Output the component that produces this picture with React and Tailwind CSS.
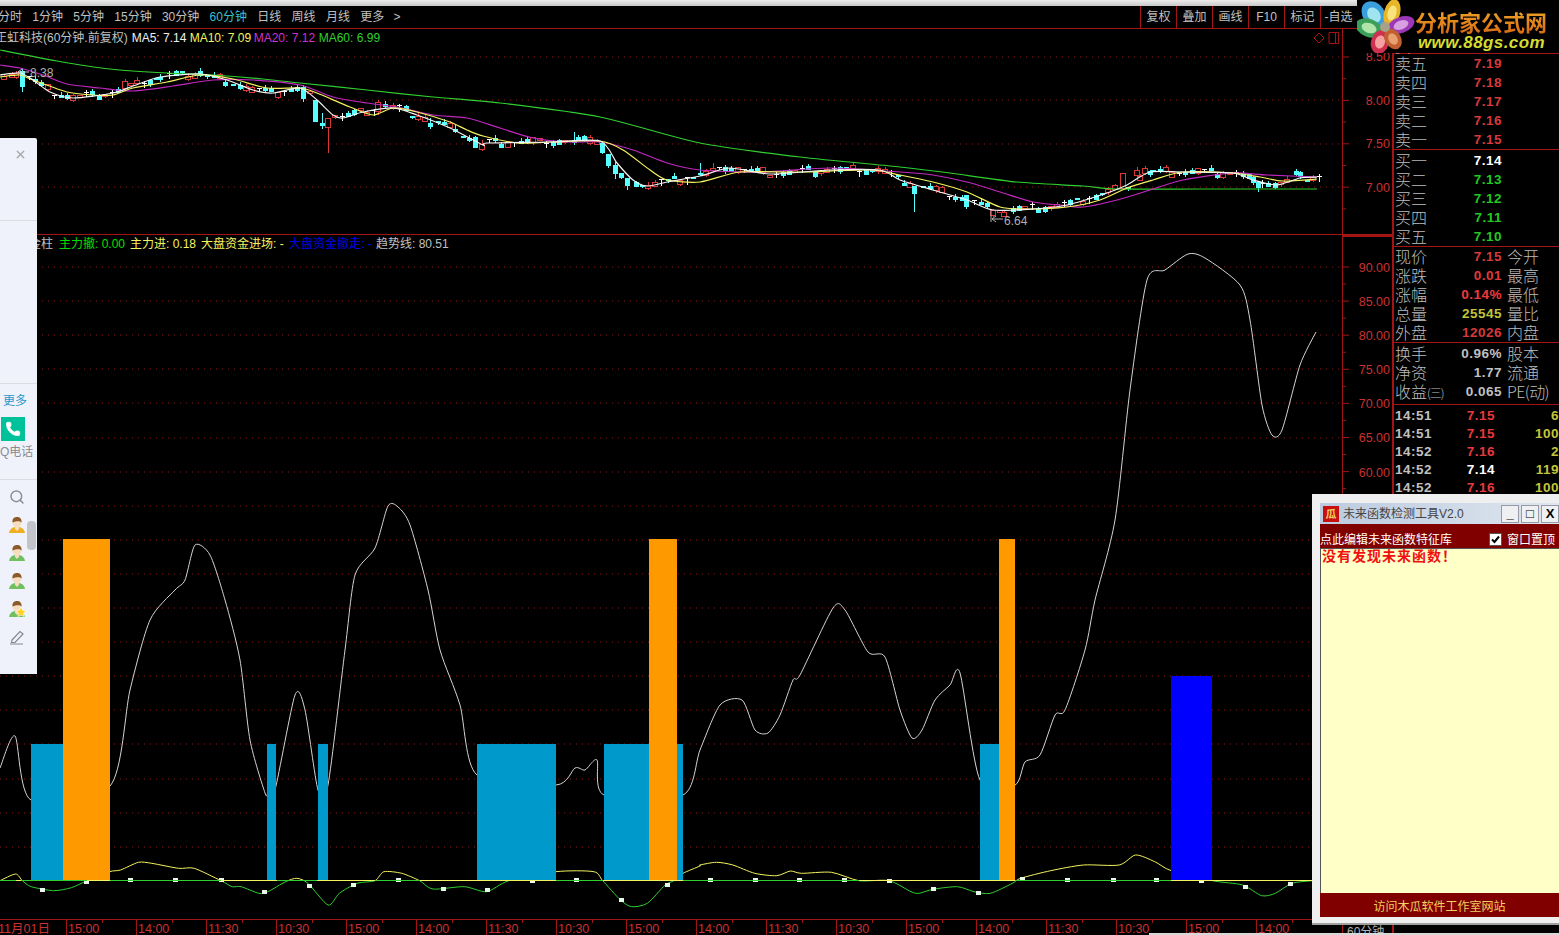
import React from "react";
import { Phone, Search, X } from "lucide-react";

const RED = "#a51414";
const cjk = "font-['Liberation_Sans','Noto_Sans_CJK_SC',sans-serif]";

const smooth = (pts) => {
  let d = `M${pts[0][0]} ${pts[0][1]}`;
  for (let i = 0; i < pts.length - 1; i++) {
    const p0 = pts[i - 1] || pts[i], p1 = pts[i], p2 = pts[i + 1], p3 = pts[i + 2] || p2;
    const c1x = p1[0] + (p2[0] - p0[0]) / 8, c1y = p1[1] + (p2[1] - p0[1]) / 8;
    const c2x = p2[0] - (p3[0] - p1[0]) / 8, c2y = p2[1] - (p3[1] - p1[1]) / 8;
    d += `C${c1x.toFixed(1)} ${c1y.toFixed(1)} ${c2x.toFixed(1)} ${c2y.toFixed(1)} ${p2[0].toFixed(1)} ${p2[1].toFixed(1)}`;
  }
  return d;
};

const ma60 = [[0,50],[57,61],[110,69],[167,73],[213,75],[263,79],[300,83],[367,90],[433,97],[500,103],[600,117],[700,143],[800,157],[900,167],[950,173],[1017,182],[1083,186],[1117,189],[1200,189],[1317,189]];
const ma20 = [[0,65],[20,68],[43,75],[67,84],[100,88],[133,91],[173,86],[213,80],[253,80],[300,85],[333,97],[367,103],[397,107],[433,115],[467,118],[500,128],[533,138],[567,142],[600,142],[633,150],[667,163],[700,170],[760,172],[830,168],[900,172],[933,175],[967,182],[1000,192],[1033,202],[1060,205],[1083,207],[1117,200],[1150,190],[1183,180],[1233,173],[1267,175],[1317,177]];
const ma10 = [[0,77],[20,75],[33,80],[67,92],[93,95],[113,95],[133,88],[167,82],[200,75],[233,79],[267,88],[300,88],[317,93],[350,107],[373,115],[393,108],[417,112],[450,122],[467,130],[483,136],[517,143],[550,142],[600,141],[623,150],[650,170],[667,180],[700,182],[740,172],[800,172],[870,170],[900,175],[933,182],[967,192],[1000,207],[1027,209],[1067,207],[1100,200],[1127,188],[1153,180],[1183,172],[1233,173],[1260,177],[1283,181],[1317,179]];
const ma5 = [[0,75],[20,73],[33,80],[50,92],[73,98],[113,93],[133,86],[160,77],[200,74],[227,80],[253,90],[273,93],[300,88],[317,100],[333,115],[343,118],[363,112],[393,108],[417,115],[450,128],[483,145],[487,143],[550,142],[600,141],[617,163],[633,180],[647,186],[667,182],[700,176],[730,168],[770,174],[830,170],[880,170],[900,180],[933,190],[967,200],[993,210],[1033,209],[1067,205],[1107,193],[1127,185],[1150,172],[1183,172],[1233,173],[1253,180],[1277,185],[1300,178],[1317,177]];

const interp = (pts, x) => {
  for (let i = 1; i < pts.length; i++) {
    if (x <= pts[i][0]) {
      const [a, b] = pts[i - 1], [c, d] = pts[i];
      return b + ((x - a) / (c - a)) * (d - b);
    }
  }
  return pts[pts.length - 1][1];
};

const bigCandles = [
  ["c",22,71,87,68,92],["c",315,100,122,100,122],["c",322,123,126,113,129],["r",328,118,127,118,153],["r",378,102,111,100,115],
  ["c",303,87,99,85,102],["r",125,81,88,79,90],["c",475,137,148,136,148],["r",482,144,149,140,151],["c",602,143,153,142,154],["c",608,154,166,154,168],
  ["c",615,165,174,162,179],["c",621,173,178,173,179],["c",627,178,186,178,190],["c",914,186,194,186,212],["c",966,195,207,195,209],
  ["r",1123,173,188,173,188],["c",1150,171,175,170,177],["c",1253,177,183,176,185],["c",1258,182,188,182,192],["c",1296,171,175,169,176],
  ["r",12,74,77,72,78],["r",4,76,79,74,80],["c",160,77,80,74,82],["c",200,71,76,68,77],["c",240,85,89,82,90],["c",225,82,86,80,87],
  ["c",385,104,107,101,108],["c",430,123,127,118,129],["c",455,129,132,125,133],["c",700,173,175,163,176],["r",713,168,170,163,172],["c",725,167,172,165,174],
  ["r",590,137,143,135,145],["c",574,141,143,132,145],["r",1004,212,216,210,217],["r",1137,170,175,167,177],["r",1145,168,173,166,175],
];

function TopChart() {
  const candles = [];
  for (let i = 0; i <= 206; i++) {
    const x = 3 + i * 6.39;
    if (bigCandles.some((b) => Math.abs(b[1] - x) < 3.2)) continue;
    const y = interp(ma5, x) + ((i * 13) % 7) - 3;
    const k = (i * 11) % 9;
    const kind = k < 4 ? "c" : k < 7 ? "r" : "w";
    const h = 2 + ((i * 5) % 4);
    candles.push([kind, x, y - h / 2, y + h / 2, y - h / 2 - ((i * 3) % 4), y + h / 2 + ((i * 7) % 3)]);
  }
  const all = [...candles, ...bigCandles];
  return (
    <svg className="block w-full h-[188px]" viewBox="0 46 1342 188">
      {[57, 100, 144, 187].map((y) => (
        <line key={y} x1="0" x2="1342" y1={y} y2={y} stroke="#8a1a1a" strokeDasharray="1 5" />
      ))}
      <g shapeRendering="crispEdges">
        {all.map(([k, x, a, b, hi, lo], i) => {
          const cx = Math.round(x);
          const col = k === "c" ? "#55ffff" : k === "r" ? "#d83838" : "#ffffff";
          return (
            <g key={i}>
              <line x1={cx + 0.5} x2={cx + 0.5} y1={hi} y2={lo} stroke={col} />
              {k === "c" && <rect x={cx - 2} y={a} width="5" height={b - a} fill={col} />}
              {k === "r" && <rect x={cx - 2.5} y={a} width="5" height={b - a} fill="#000" stroke={col} />}
              {k === "w" && <line x1={cx - 2} x2={cx + 3} y1={a} y2={a} stroke={col} />}
            </g>
          );
        })}
      </g>
      <path d={smooth(ma60)} fill="none" stroke="#30d030" strokeWidth="1.2" />
      <path d={smooth(ma20)} fill="none" stroke="#c028c0" strokeWidth="1.2" />
      <path d={smooth(ma10)} fill="none" stroke="#f4f460" strokeWidth="1.2" />
      <path d={smooth(ma5)} fill="none" stroke="#f4f4f4" strokeWidth="1.2" />
      <path d="M29 72 H18 M18 72 l4 -3 M18 72 l4 3" stroke="#d0d0d0" fill="none" />
      <text x="30" y="77" fontSize="12" fill="#b0b0b0" fontFamily="Liberation Sans">8.38</text>
      <path d="M991 210 V222 M992 219 H1003 M992 219 l4 -3 M992 219 l4 3" stroke="#b0b0b0" fill="none" />
      <text x="1004" y="225" fontSize="12" fill="#b0b0b0" fontFamily="Liberation Sans">6.64</text>
    </svg>
  );
}

const trend = [[0,768],[15,736],[31,800],[110,786],[130,690],[150,620],[175,590],[185,580],[195,545],[210,555],[225,600],[240,660],[250,740],[265,793],[268,793],[275,790],[295,695],[305,710],[318,790],[328,785],[345,650],[355,575],[375,548],[388,506],[398,507],[410,525],[428,590],[440,650],[460,705],[477,775],[556,785],[575,768],[585,770],[597,760],[604,795],[683,795],[700,750],[720,705],[742,700],[755,730],[768,733],[780,715],[793,680],[800,675],[833,608],[845,610],[868,652],[885,657],[900,710],[912,738],[922,730],[935,700],[950,685],[960,673],[980,780],[1015,785],[1025,762],[1040,755],[1055,715],[1065,710],[1085,650],[1095,600],[1115,520],[1130,390],[1147,280],[1165,270],[1188,254],[1205,258],[1240,285],[1250,320],[1262,405],[1272,435],[1282,430],[1300,365],[1316,332]];

const z6 = [[0,122],[35,102],[50,122],[70,140],[120,152],[160,143],[195,122],[245,95],[270,90],[310,67],[340,70],[400,85],[435,85],[495,122],[520,140],[540,140],[580,160],[600,155],[640,125],[665,115],[690,130],[735,195],[760,160],[800,130],[840,122],[860,95],[900,100],[940,122],[970,147],[1040,140],[1090,155],[1140,122],[1245,95],[1330,95],[1350,122],[1390,180],[1415,200],[1450,190],[1490,135],[1510,122],[1530,100],[1568,78]].map(([x,y]) => [x / 2.24, 840 + y / 3]);
const z7 = [[0,75],[30,67],[60,75],[100,100],[140,107],[165,93],[185,100],[240,97],[290,122],[345,122],[385,155],[400,160],[425,148],[470,140],[500,155],[530,160],[570,130],[585,115],[640,92],[700,75],[765,75],[795,45],[830,65],[860,92],[935,122],[990,135],[1025,167],[1050,160],[1080,130],[1118,122]].map(([x,y]) => [700 + x / 1.825, 840 + y / 3]);
const osc = [...z6, ...z7];

const dotsA = [[93,150],[193,125],[292,120],[393,120],[494,120],[592,156],[693,138],[791,135],[892,120],[993,147],[1092,150],[1192,123],[1291,120],[1392,180],[1493,135]].map(([x,y]) => [x / 2.24, 840 + y / 3]);
const dotsB = [[19,120],[101,120],[181,120],[263,120],[345,122],[426,147],[508,158],[588,118],[670,120],[753,120],[833,120],[915,123],[995,141],[1077,131]].map(([x,y]) => [700 + x / 1.825, 840 + y / 3]);

const baseSegs = [["#f4f460",0,1312],["#30d030",0,16],["#30d030",110,221],["#30d030",277,317],["#30d030",375,420],["#30d030",556,603],["#30d030",683,859],["#30d030",1015,1171],["#30d030",21,87]];

const bars = [["#0099cc",31,63,744],["#ff9900",63,110,539],["#0099cc",267,276,744],["#0099cc",318,328,744],["#0099cc",477,556,744],["#0099cc",604,649,744],["#0099cc",677,683,744],["#ff9900",649,677,539],["#0099cc",980,999,744],["#ff9900",999,1015,539],["#0000ff",1171,1212,676]];

function BottomChart() {
  const grid = [];
  for (let i = 0; i < 18; i++) grid.push(267 + i * 34.1);
  return (
    <svg className="block w-full h-[666px]" viewBox="0 253 1342 666">
      <defs>
        <clipPath id="above"><rect x="0" y="253" width="1342" height="628" /></clipPath>
        <clipPath id="below"><rect x="0" y="881" width="1342" height="38" /></clipPath>
      </defs>
      {grid.map((y) => (
        <line key={y} x1="0" x2="1342" y1={Math.round(y)} y2={Math.round(y)} stroke="#8a1a1a" strokeDasharray="1 5" />
      ))}
      <path d={smooth(trend)} fill="none" stroke="#d4d4d4" />
      <path d={smooth(osc)} fill="none" stroke="#f4f460" clipPath="url(#above)" />
      <path d={smooth(osc)} fill="none" stroke="#30d030" clipPath="url(#below)" />
      <g shapeRendering="crispEdges">
        {[...dotsA, ...dotsB].map(([x, y], i) => (
          <rect key={i} x={Math.round(x) - 2} y={Math.round(y) - 2} width="5" height="4" fill="#e8f8e8" />
        ))}
      </g>
      {bars.map(([c, a, b, t], i) => (
        <rect key={i} x={a} y={t} width={b - a} height={881 - t} fill={c} />
      ))}
      <g shapeRendering="crispEdges">
        {baseSegs.map(([c, a, b], i) => (
          <line key={i} x1={a} x2={b} y1="880.5" y2="880.5" stroke={c} strokeWidth="1.5" />
        ))}
      </g>
    </svg>
  );
}

const timeLabels = ["15:00","14:00","11:30","10:30","15:00","14:00","11:30","10:30","15:00","14:00","11:30","10:30","15:00","14:00","11:30","10:30","15:00","14:00"];

function TimeAxis() {
  return (
    <div className={`flex h-[16px] border-t border-[#a51414] text-[12.5px] leading-[18px] text-[#c83232] ${cjk} overflow-hidden`}>
      <div className="w-[68px] shrink-0 -ml-[2px] whitespace-nowrap">11月01日</div>
      {timeLabels.map((t, i) => (
        <div key={i} className="relative w-[70px] shrink-0 border-l border-[#a51414] pl-[1px]">
          {t}
          <span className="absolute left-[35px] top-0 w-px h-[3px] bg-[#a51414]" />
        </div>
      ))}
    </div>
  );
}

const topAxis = ["8.50", "8.00", "7.50", "7.00"];
const lowAxis = ["90.00","85.00","80.00","75.00","70.00","65.00","60.00"];

function PriceAxis() {
  return (
    <div className="relative w-[49px] shrink-0">
      <svg className="absolute left-0 top-0" width="10" height="890" viewBox="0 29 10 890">
        {Array.from({ length: 8 }, (_, i) => (
          <line key={i} x1="0" x2={i % 2 ? 3 : 6} y1={57 + i * 21.7} y2={57 + i * 21.7} stroke={RED} />
        ))}
        {Array.from({ length: 40 }, (_, i) => (
          <line key={i} x1="0" x2={i % 2 ? 3 : 6} y1={267 + i * 17.05} y2={267 + i * 17.05} stroke={RED} />
        ))}
      </svg>
      <div className="h-[17px]" />
      <div className="h-[188px] flex flex-col items-end pr-[2px] text-[12.5px] text-[#c83232] font-['Liberation_Sans',sans-serif]">
        <div className="h-[1px]" />
        {topAxis.map((t) => (
          <div key={t} className="h-[43.5px] leading-[20px] whitespace-nowrap">{t}</div>
        ))}
      </div>
      <div className="h-[3px] border-t-[3px] border-[#a51414] -mr-[1px]" />
      <div className="pt-[21px] flex flex-col items-end pr-[2px] text-[12.5px] text-[#c83232] font-['Liberation_Sans',sans-serif]">
        {lowAxis.map((t) => (
          <div key={t} className="h-[34.1px] leading-[20px] whitespace-nowrap">{t}</div>
        ))}
      </div>
      <div className={`absolute left-[4px] bottom-[-4px] text-[12px] leading-[14px] text-[#b0b0b0] whitespace-nowrap ${cjk}`}>60分钟</div>
    </div>
  );
}

const num = "font-['Liberation_Sans',sans-serif] font-bold text-[13.5px] tracking-[0.5px]";
const lab = `text-[16px] text-[#bdbdbd] font-['Noto_Sans_CJK_SC',sans-serif] font-light whitespace-nowrap`;

function Row({ a, v, c, b }) {
  return (
    <div className="h-[19px] flex items-center pl-[1px]">
      <span className={`w-[48px] leading-[19px] ${lab}`}>{a}</span>
      <span className={`w-[59px] pt-[2px] text-right ${num}`} style={{ color: c }}>{v}</span>
      {b && <span className={`ml-[5px] leading-[19px] ${lab}`}>{b}</span>}
    </div>
  );
}

const sell = [["卖五","7.19"],["卖四","7.18"],["卖三","7.17"],["卖二","7.16"],["卖一","7.15"]];
const buy = [["买一","7.14","#ffffff"],["买二","7.13","#22c822"],["买三","7.12","#22c822"],["买四","7.11","#22c822"],["买五","7.10","#22c822"]];
const stats = [["现价","7.15","#d83a3a","今开"],["涨跌","0.01","#e03a3a","最高"],["涨幅","0.14%","#f03a3a","最低"],["总量","25545","#c4c43a","量比"],["外盘","12026","#d83a3a","内盘"]];
const extra = [
  ["换手","0.96%","#c0c0c0","股本"],
  ["净资","1.77","#c0c0c0","流通"],
  [<>收益<span className="text-[12px] tracking-[-1px]">(三)</span></>,"0.065","#c0c0c0",<span className="tracking-[-0.6px]">PE(动)</span>],
];
const ticks = [["14:51","7.15","#e83a3a","6"],["14:51","7.15","#e83a3a","100"],["14:52","7.16","#e83a3a","2"],["14:52","7.14","#ffffff","119"],["14:52","7.16","#e83a3a","100"]];

function InfoPanel() {
  return (
    <div className="w-[167px] shrink-0 border-l-2 border-[#a51414] overflow-hidden">
      <div className="h-[25px] border-b border-[#a51414] pl-[1px] pt-[4px]">
        <span className={lab}>委比</span>
      </div>
      <div className="border-b border-[#a51414]">
        {sell.map(([a, v]) => <Row key={a} a={a} v={v} c="#d83a3a" />)}
      </div>
      <div className="border-b border-[#a51414] pt-[1px]">
        {buy.map(([a, v, c]) => <Row key={a} a={a} v={v} c={c} />)}
      </div>
      <div className="border-b border-[#a51414]">
        {stats.map(([a, v, c, b]) => <Row key={a} a={a} v={v} c={c} b={b} />)}
      </div>
      <div className="border-b border-[#a51414] pt-[1px] pb-[3px]">
        {extra.map(([a, v, c, b], i) => <Row key={i} a={a} v={v} c={c} b={b} />)}
      </div>
      <div className="pt-[2px]">
        {ticks.map(([t, p, c, n], i) => (
          <div key={i} className={`h-[18px] flex items-center pl-[1px] ${num}`}>
            <span className="w-[50px] text-[#c0c0c0]">{t}</span>
            <span className="w-[54px] text-right" style={{ color: c }}>{p}</span>
            <span className="w-[64px] text-right text-[#c4c43a] shrink-0">{n}</span>
          </div>
        ))}
      </div>
    </div>
  );
}

function Toolbar() {
  const left = ["分时","1分钟","5分钟","15分钟","30分钟","60分钟","日线","周线","月线","更多"];
  const right = ["复权","叠加","画线","F10","标记","-自选"];
  return (
    <div className={`h-[23px] flex border-b border-[#a51414] text-[12px] text-[#c0c0c0] ${cjk}`}>
      <div className="flex-1 flex items-center gap-[10.3px] -ml-[2px]">
        {left.map((t) => (
          <span key={t} className={t === "60分钟" ? "text-[#38c0d0]" : ""}>{t}</span>
        ))}
        <span className="font-['Liberation_Sans'] ml-[-1px]">&gt;</span>
      </div>
      <div className="flex mr-[203px]">
        {right.map((t) => (
          <span key={t} className="w-[36px] flex items-center justify-center border-l border-[#a51414] whitespace-nowrap">{t}</span>
        ))}
      </div>
    </div>
  );
}

function Logo() {
  const petals = [
    ["#3a9fdc", "#a0e4f0", 1374, 15, 11, 15, -35],
    ["#e8b428", "#f8e47a", 1392, 13, 8, 14, 15],
    ["#9c38b8", "#d8a0e0", 1401, 25, 14, 8, -20],
    ["#3aa05a", "#b0e4a8", 1369, 28, 14, 9, 20],
    ["#d03050", "#f4a0a0", 1380, 42, 9, 12, 15],
    ["#c06030", "#e8a070", 1393, 39, 8, 11, -30],
  ];
  return (
    <div className="absolute left-[1357px] top-0 w-[202px] h-[53px] bg-black flex overflow-hidden">
      <svg width="58" height="53" viewBox="1357 0 58 53" className="shrink-0">
        {petals.map(([a, b, x, y, rx, ry, r], k) => (
          <g key={k} transform={`rotate(${r} ${x} ${y})`}>
            <ellipse cx={x} cy={y} rx={rx} ry={ry} fill={a} />
            <ellipse cx={x} cy={y} rx={rx * 0.55} ry={ry * 0.55} fill={b} />
          </g>
        ))}
        <circle cx="1385" cy="27" r="5" fill="#a8a088" />
      </svg>
      <div className="flex flex-col items-start mt-[8px]">
        <span className="text-[22px] leading-[26px] font-bold bg-gradient-to-b from-[#f0a828] to-[#d86a14] bg-clip-text text-transparent whitespace-nowrap font-['Noto_Sans_CJK_SC',sans-serif]">分析家公式网</span>
        <span className="ml-[3px] text-[17px] leading-[18px] font-bold italic text-[#d4dc30] whitespace-nowrap tracking-[0.4px] font-['Liberation_Sans',sans-serif]">www.88gs.com</span>
      </div>
    </div>
  );
}

function User({ body, star }) {
  return (
    <svg width="18" height="18" viewBox="0 0 18 18">
      <path d="M1 17 C2 12 5 11 9 11 C13 11 16 12 17 17 Z" fill={body} />
      <path d="M7 10 h4 v3 l-2 2 l-2 -2 Z" fill="#f6ddc0" />
      <circle cx="9" cy="6.5" r="4.5" fill="#f6ddc0" />
      <path d="M4.5 6.5 C4 2 7 1 9 1 C12 1 14 3 13.5 6.5 C12 4.5 8 5 4.5 6.5 Z" fill="#8a5a2a" />
      {star && <path d="M13 7 l1.6 3.2 3.4 .5 -2.5 2.4 .6 3.4 -3.1 -1.6 -3.1 1.6 .6 -3.4 -2.5 -2.4 3.4 -.5 Z" fill="#ffd21e" stroke="#fff" strokeWidth=".6" />}
    </svg>
  );
}

function SidePanel() {
  return (
    <div className={`absolute left-0 top-[138px] w-[37px] h-[536px] bg-[#eff2fb] rounded-tr-[2px] flex flex-col ${cjk}`}>
      <div className="h-[83px] border-b border-[#dcdde2] flex justify-end pr-[10px] pt-[10px]">
        <X size={13} strokeWidth={2.5} className="text-[#a8a8a8]" />
      </div>
      <div className="h-[163px] border-b border-[#dcdde2]" />
      <div className="h-[96px] border-b border-[#dcdde2] flex flex-col items-start">
        <span className="text-[12px] leading-[16px] mt-[9px] ml-[3px] text-[#2a96cc]">更多</span>
        <div className="w-[24px] h-[24px] mt-[8px] ml-[1px] bg-[#00c29a] flex items-center justify-center">
          <Phone size={16} fill="#fff" stroke="#fff" strokeWidth={1} />
        </div>
        <span className="text-[12px] leading-[16px] mt-[3px] text-[#8a8a90] whitespace-nowrap">Q电话</span>
      </div>
      <div className="relative flex-1 flex flex-col items-center pr-[3px] pt-[9px] gap-[10px]">
        <Search size={16} strokeWidth={2.2} className="text-[#8a8e96] mb-[1px]" />
        <User body="#efb020" />
        <User body="#70c060" />
        <User body="#70c060" />
        <User body="#70c060" star />
        <svg width="16" height="16" viewBox="0 0 16 16" className="mt-[1px]" fill="none" stroke="#85888f" strokeWidth="1.2">
          <path d="M3 11 L11 2.5 L14 5 L6 13.5 H2.5 Z M1 15 H14" />
        </svg>
        <div className="absolute right-[1px] top-[41px] w-[9px] h-[29px] rounded-[4px] bg-[#c2c4ca]" />
      </div>
    </div>
  );
}

function FloatWindow() {
  return (
    <div className={`absolute left-[1312px] top-[494px] w-[247px] h-[431px] bg-[#efefef] border-b-2 border-b-[#a0a0a0] pl-[8px] pt-[9px] flex flex-col ${cjk}`}>
      <div className="h-[21px] bg-gradient-to-r from-[#bccbe0] to-[#dfe6ef] flex items-center shrink-0">
        <span className="w-[16px] h-[16px] ml-[3px] bg-[#c81010] text-[#f0d060] text-[11px] leading-[16px] text-center font-bold">瓜</span>
        <span className="ml-[4px] text-[12px] text-[#444]">未来函数检测工具V2.0</span>
        <div className="ml-auto flex gap-[2px]">
          {["_", "□", "X"].map((t) => (
            <span key={t} className="w-[18px] h-[18px] bg-[#eef0f2] border border-[#99a] text-[13px] leading-[15px] text-center font-bold text-black">{t}</span>
          ))}
        </div>
      </div>
      <div className="h-[24px] bg-[#800000] flex items-center justify-between text-white text-[12px] shrink-0 pt-[7px]">
        <span>点此编辑未来函数特征库</span>
        <label className="flex items-center gap-[5px] pr-[4px]">
          <span className="w-[13px] h-[13px] bg-white border border-[#555] flex items-center justify-center">
            <svg width="9" height="9" viewBox="0 0 9 9"><path d="M1 4.5 L3.5 7 L8 1.5" fill="none" stroke="#000" strokeWidth="2" /></svg>
          </span>
          <span>窗口置顶</span>
        </label>
      </div>
      <div className="flex-1 bg-[#ffffc8] border-t border-l border-[#555] text-[#f01010] text-[14px] leading-[16px] tracking-[1px] font-bold font-['Liberation_Serif','Noto_Sans_CJK_SC',serif] pl-[1px]">
        没有发现未来函数！
      </div>
      <div className="h-[24px] mb-[6px] bg-[#800000] text-[#f0d060] text-[12px] leading-[28px] text-center shrink-0">
        访问木瓜软件工作室网站
      </div>
    </div>
  );
}

export default function App() {
  return (
    <div className="relative w-[1559px] h-[935px] bg-black overflow-hidden">
      <div className="h-[6px] bg-gradient-to-b from-[#ececec] to-[#c8c8c8]" />
      <Toolbar />
      <div className="flex">
        <div className="w-[1343px] shrink-0 border-r border-[#a51414]">
          <div className={`h-[17px] flex items-center text-[12px] whitespace-nowrap ${cjk}`}>
            <span className="-ml-[5px] text-[#c0c0c0]">正虹科技(60分钟.前复权)</span>
            <span className="ml-[4px] text-[#f0f0f0] w-[58px]">MA5: 7.14</span>
            <span className="text-[#f4f460] w-[64px]">MA10: 7.09</span>
            <span className="text-[#d030d0] w-[65px]">MA20: 7.12</span>
            <span className="text-[#30d030]">MA60: 6.99</span>
            <svg width="26" height="12" viewBox="0 0 26 12" className="ml-auto mr-[3px]" fill="none" stroke="#a51414">
              <path d="M6 1 l5 5 l-5 5 l-5 -5 z M16 .5 h9.5 v11 h-9.5 z M22.5 .5 v11" />
            </svg>
          </div>
          <TopChart />
          <div className="border-t border-[#a51414] h-[19px] flex items-center text-[12px] whitespace-nowrap pl-[29px] gap-[5px]">
            <span className={`text-[#c0c0c0] ${cjk} w-[25px]`}>金柱</span>
            <span className={`text-[#00e000] ${cjk} w-[66px]`}>主力撤: 0.00</span>
            <span className={`text-[#f4f460] ${cjk} w-[66px]`}>主力进: 0.18</span>
            <span className={`text-[#f4f460] ${cjk} w-[83px]`}>大盘资金进场: -</span>
            <span className={`text-[#0000ee] ${cjk} w-[82px]`}>大盘资金撤走: -</span>
            <span className={`text-[#c0c0c0] ${cjk}`}>趋势线: 80.51</span>
          </div>
          <BottomChart />
          <TimeAxis />
        </div>
        <PriceAxis />
        <InfoPanel />
      </div>
      <Logo />
      <SidePanel />
      <FloatWindow />
      <div className="absolute left-[1149px] right-0 bottom-0 h-[2px] bg-[#d8d8d8]" />
    </div>
  );
}
